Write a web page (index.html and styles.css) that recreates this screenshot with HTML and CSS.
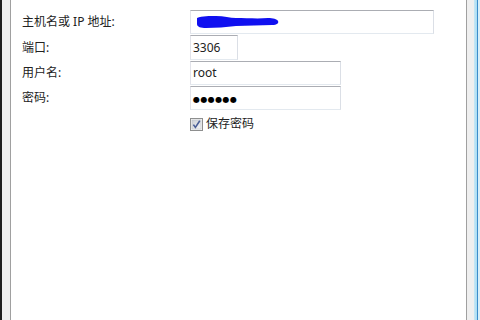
FILE: index.html
```html
<!DOCTYPE html>
<html lang="zh-CN">
<head>
    <meta charset="UTF-8">
    <title>连接设置</title>
    <link rel="stylesheet" href="styles.css">
</head>
<body>
    <div class="window">
        <div class="frame"></div>
        <div class="panel">
            <div class="form">
                <label class="label">主机名或 IP 地址:</label>
                <div class="field field-host">
                    <!-- redacted address -->
                    <svg class="scribble" width="84" height="14" viewBox="0 0 84 14">
                        <path d="M1 3 C 6 1, 14 1, 20 1 C 28 1, 34 3, 40 3 C 50 3, 62 4, 72 3 C 77 3, 81 4, 82 6 C 83 8, 81 10, 76 10 C 64 10, 52 11, 40 11 C 30 12, 20 13, 10 13 C 5 13, 1 12, 1 9 Z" fill="#1010f0"/>
                    </svg>
                </div>

                <label class="label">端口:</label>
                <div class="field field-port">3306</div>

                <label class="label">用户名:</label>
                <div class="field field-user">root</div>

                <label class="label">密码:</label>
                <div class="field field-user"><span class="dots">●●●●●●</span></div>

                <div class="spacer"></div>
                <div class="check-row">
                    <svg class="checkbox" width="13" height="13" viewBox="0 0 13 13">
                        <defs>
                            <linearGradient id="box" x1="0" y1="0" x2="1" y2="1">
                                <stop offset="0" stop-color="#cbcfd5"/>
                                <stop offset="1" stop-color="#f6f6f6"/>
                            </linearGradient>
                        </defs>
                        <rect x="0.5" y="0.5" width="12" height="12" fill="#f4f4f4" stroke="#8e8f8f"/>
                        <rect x="2" y="2" width="9" height="9" fill="url(#box)" stroke="#bcc1c8" stroke-width="0.6"/>
                        <path d="M3.4 6.6 L5.4 9.4 L9.8 2.8" fill="none" stroke="#4a5f97" stroke-width="1.6"/>
                    </svg>
                    <span>保存密码</span>
                </div>
            </div>
        </div>
        <div class="frame frame-right"></div>
        <div class="edge"></div>
    </div>
</body>
</html>
```

FILE: styles.css
```css
body {
    margin: 0;
    font-family: "Noto Sans", "Noto Sans CJK SC", sans-serif;
    font-size: 12px;
    color: #000;
}

.window {
    display: flex;
    width: 480px;
    height: 320px;
    border-left: 2px solid #1f1f1f;
    box-sizing: border-box;
}

.frame {
    width: 8px;
    background: #efefef;
}

.frame-right {
    width: 7px;
}

.edge {
    width: 6px;
    background: linear-gradient(to right, #c6e7f5 0, #a9dcf2 3px, #3c8ccb 3px, #3c8ccb 4px, #d7eef8 4px);
}

.panel {
    flex: 1;
    background: #fff;
    border-left: 1px solid #a0a0a0;
    border-right: 1px solid #a0a0a0;
}

.form {
    display: grid;
    grid-template-columns: 168px auto;
    row-gap: 1px;
    align-items: center;
    justify-items: start;
    padding: 10px 0 0 11px;
}

.label {
    line-height: 16px;
    color: #222;
}

.field {
    position: relative;
    box-sizing: border-box;
    height: 24px;
    padding: 0 2px;
    line-height: 22px;
    color: #222;
    border: 1px solid;
    border-color: #abadb3 #dbdfe6 #e3e9ef #e2e3ea;
    background: #fff;
}

.field-host {
    width: 244px;
}

.field-port {
    width: 48px;
    height: 25px;
    line-height: 23px;
}

.field-user {
    width: 151px;
}

.dots {
    font-family: "DejaVu Sans", sans-serif;
    font-size: 8px;
    letter-spacing: 0.4px;
    color: #000;
}

.scribble {
    position: absolute;
    left: 5px;
    top: 4px;
}

.check-row {
    display: flex;
    align-items: center;
    gap: 3px;
    margin-top: 5px;
    line-height: 16px;
    color: #222;
}

.checkbox {
    display: block;
}
```
